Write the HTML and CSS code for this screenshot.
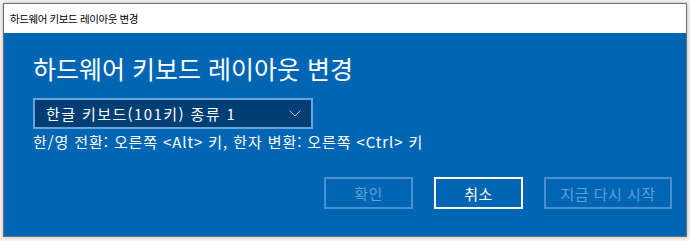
FILE: index.html
```html
<!DOCTYPE html>
<html lang="ko">
<head>
    <meta charset="UTF-8">
    <title>하드웨어 키보드 레이아웃 변경</title>
    <link rel="stylesheet" href="styles.css">
</head>
<body>
    <div class="window">
        <div class="title-bar">하드웨어 키보드 레이아웃 변경</div>
        <div class="content">
            <h1 class="heading">하드웨어 키보드 레이아웃 변경</h1>
            <div class="select-box">
                <span class="select-text">한글 키보드(101키) 종류 1</span>
                <svg class="chevron" width="12" height="7" viewBox="0 0 12 7">
                    <path d="M0.5 0.5 L6 6 L11.5 0.5" fill="none" stroke="#a9c9e8" stroke-width="1"/>
                </svg>
            </div>
            <p class="info">한/영 전환: 오른쪽 &lt;Alt&gt; 키, 한자 변환: 오른쪽 &lt;Ctrl&gt; 키</p>
            <div class="buttons">
                <button class="btn disabled">확인</button>
                <button class="btn active">취소</button>
                <button class="btn disabled wide">지금 다시 시작</button>
            </div>
        </div>
    </div>
</body>
</html>
```

FILE: styles.css
```css
body {
    margin: 0;
    padding: 0;
    background-color: #f3f3f3;
    font-family: "Noto Sans CJK KR", "Noto Sans", sans-serif;
}
.window {
    margin: 3px;
    width: 682px;
    height: 232px;
    border: 1px solid #6f6f6f;
    box-shadow: 0 0 4px rgba(0, 0, 0, 0.25);
    display: flex;
    flex-direction: column;
    background: #0066b4;
}
.title-bar {
    height: 29px;
    background: #fff;
    color: #000;
    font-size: 10.5px;
    letter-spacing: -0.4px;
    line-height: 29px;
    padding-left: 6px;
}
.content {
    flex: 1;
    padding: 0 14px 0 29px;
    color: #fff;
}
.heading {
    margin: 17px 0 0;
    font-size: 25px;
    font-weight: normal;
    line-height: 36px;
}
/* 드롭다운 */
.select-box {
    margin-top: 12px;
    width: 255px;
    height: 27px;
    border: 2px solid #6aa3d8;
    background: #003e73;
    display: flex;
    align-items: center;
    justify-content: space-between;
    padding: 0 10px 0 11px;
}
.select-text {
    font-size: 15px;
    letter-spacing: 1.4px;
    line-height: 20px;
}
.chevron {
    display: block;
}
.info {
    margin: 3px 0 0;
    font-size: 15px;
    letter-spacing: 0.9px;
    line-height: 20px;
}
/* 버튼 */
.buttons {
    margin-top: 25px;
    display: flex;
    justify-content: flex-end;
    gap: 21px;
}
.btn {
    width: 89px;
    height: 32px;
    background: transparent;
    border: 2px solid #4b91cf;
    color: #5f9fd8;
    font-family: inherit;
    font-size: 15px;
    letter-spacing: 0.5px;
    padding: 0;
}
.btn.active {
    border-color: #fff;
    color: #fff;
}
.btn.wide {
    width: 128px;
}
```
